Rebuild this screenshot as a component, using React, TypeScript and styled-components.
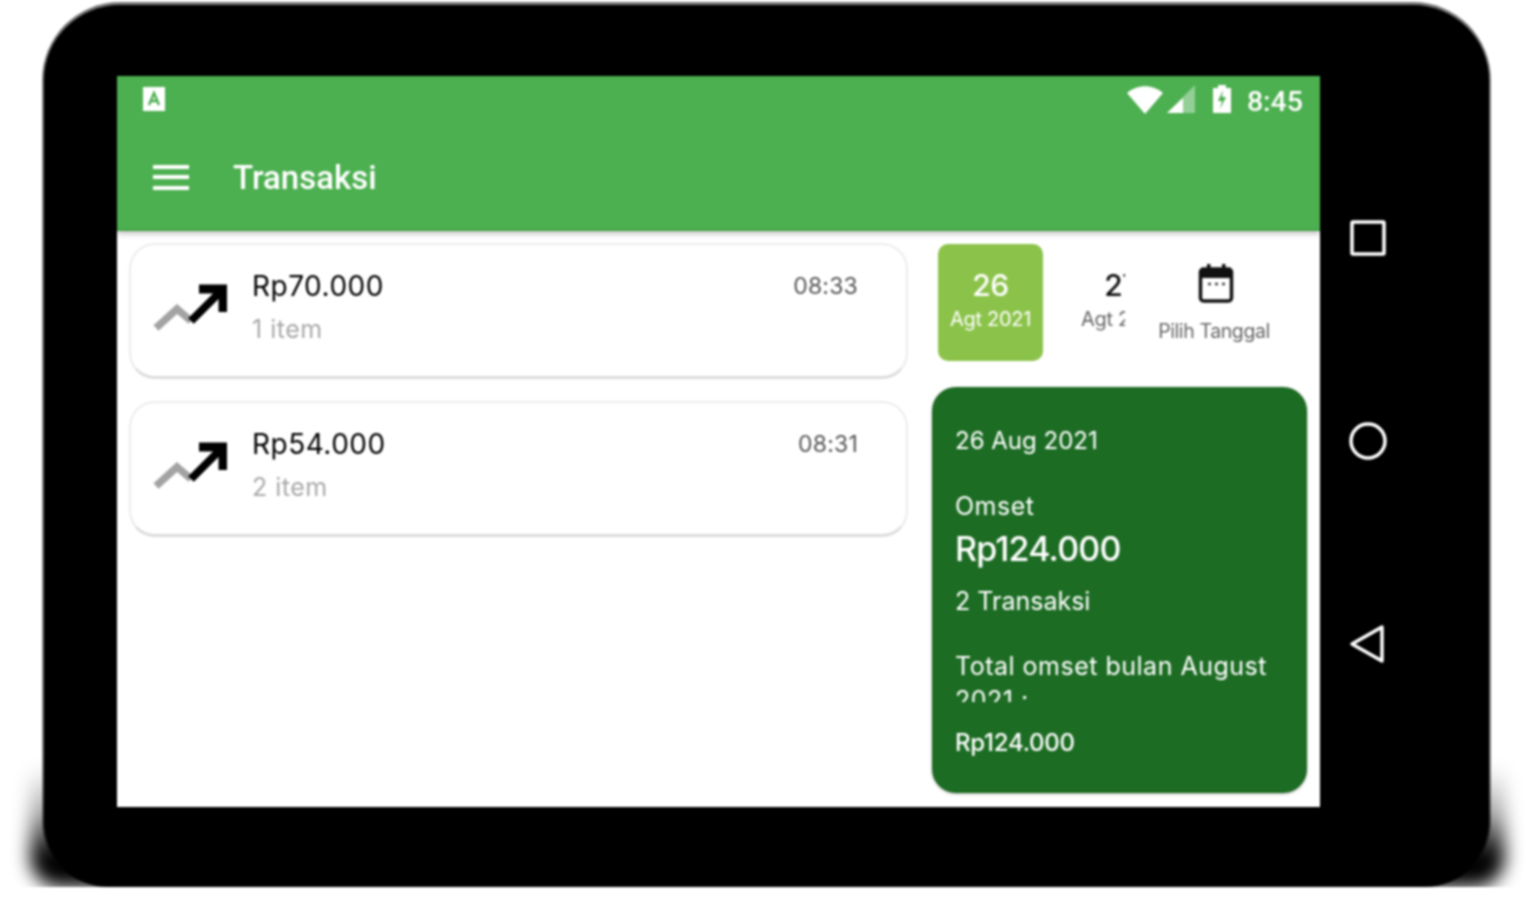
import React from "react";
import styled, { createGlobalStyle } from "styled-components";

const GlobalStyle = createGlobalStyle`
  html, body {
    margin: 0;
    padding: 0;
    background: #fff;
    overflow: hidden;
  }
  * {
    box-sizing: border-box;
  }
`;

const Page = styled.div`
  width: 1531px;
  height: 900px;
  padding: 2px 40px 0 42px;
  background: #fff;
  filter: blur(1px);
`;

const Device = styled.div`
  position: relative;
  z-index: 0;
  display: flex;
  align-items: flex-start;
  width: 1449px;
  height: 885px;
  padding: 71px 0 0 73px;
  background: #000;
  border: 2px solid #777;
  border-top-width: 3px;
  border-bottom-color: #111;
  border-radius: 78px 78px 66px 66px;

  &::before {
    content: "";
    position: absolute;
    z-index: -1;
    left: -14px;
    right: -16px;
    bottom: -2px;
    height: 120px;
    background: linear-gradient(to top, #000 25%, rgba(0, 0, 0, 0.35) 60%, transparent);
    border-radius: 0 0 30px 30px;
    filter: blur(9px);
    clip-path: inset(-50px -50px 0 -50px);
  }
`;

const Screen = styled.div`
  display: flex;
  flex-direction: column;
  width: 1203px;
  height: 731px;
  background: #fff;
  overflow: hidden;
`;

const AppHeader = styled.header`
  flex: none;
  height: 155px;
  background: #4caf50;
  border-bottom: 2px solid #43a547;
  box-shadow: 0 2px 6px rgba(0, 0, 0, 0.3);
  position: relative;
`;

const StatusBar = styled.div`
  display: flex;
  align-items: center;
  justify-content: space-between;
  height: 46px;
  padding: 0 17px 0 25px;
`;

const StatusIcons = styled.div`
  display: flex;
  align-items: center;
`;

const StatusTime = styled.span`
  margin-left: 15px;
  padding-top: 4px;
  font: 500 28.5px "Roboto", sans-serif;
  color: #fff;
`;

const Toolbar = styled.div`
  display: flex;
  align-items: center;
  height: 107px;
  padding: 3px 0 0 36px;
`;

const Title = styled.h1`
  margin: 0 0 0 44px;
  font: 500 33px "Roboto", sans-serif;
  color: #fff;
`;

const Body = styled.main`
  flex: 1;
  display: flex;
  min-height: 0;
`;

const ListColumn = styled.section`
  display: flex;
  flex-direction: column;
  gap: 22px;
  width: 802px;
  padding: 12px 0 0 12px;
`;

const TxCard = styled.article`
  display: flex;
  align-items: flex-start;
  width: 779px;
  height: 136px;
  padding: 21px 48px 0 21px;
  background: #fff;
  border: 2px solid #ececec;
  border-bottom: 3px solid #dcdcdc;
  border-radius: 26px;
`;

const TrendIcon = styled.svg`
  flex: none;
  width: 75px;
  height: 52px;
  margin: 16px 25px 0 0;
`;

const TxInfo = styled.div`
  flex: 1;
`;

const Amount = styled.div`
  font: 400 28px/40px "Inter", sans-serif;
  letter-spacing: 0.5px;
  color: #000;
`;

const Items = styled.div`
  margin-top: 3px;
  font: 400 25px/40px "Inter", sans-serif;
  letter-spacing: 0.5px;
  color: #a9a9a9;
`;

const TxTime = styled.div`
  font: 400 23px/40px "Inter", sans-serif;
  letter-spacing: 0.2px;
  color: #555;
`;

const SideColumn = styled.aside`
  flex: 1;
  display: flex;
  flex-direction: column;
  padding: 13px 13px 14px 13px;
`;

const DateRow = styled.div`
  display: flex;
  align-items: flex-start;
  height: 117px;
  margin-bottom: 26px;
`;

const DateScroller = styled.div`
  display: flex;
  gap: 26px;
  width: 193px;
  padding-left: 6px;
  overflow: hidden;
`;

const DateTab = styled.div<{ $active?: boolean }>`
  flex: none;
  display: flex;
  flex-direction: column;
  align-items: center;
  width: 105px;
  height: 117px;
  padding-top: 23px;
  border-radius: 10px;
  background: ${({ $active }) => ($active ? "#8bc34a" : "transparent")};
`;

const DateDay = styled.div<{ $active?: boolean }>`
  font: 500 30px/36px "Inter", sans-serif;
  letter-spacing: -0.5px;
  color: ${({ $active }) => ($active ? "#fff" : "#111")};
`;

const DateMonth = styled.div<{ $active?: boolean }>`
  margin-top: 2px;
  font: 400 20px/28px "Inter", sans-serif;
  letter-spacing: -0.3px;
  white-space: nowrap;
  color: ${({ $active }) => ($active ? "#fff" : "#666")};
`;

const PickDate = styled.div`
  flex: 1;
  display: flex;
  flex-direction: column;
  align-items: center;
  padding-top: 19px;
`;

const PickLabel = styled.div`
  margin: 14px 4px 0 0;
  font: 400 19.5px/28px "Inter", sans-serif;
  letter-spacing: -0.4px;
  white-space: nowrap;
  color: #666;
`;

const Summary = styled.div`
  display: flex;
  flex-direction: column;
  height: 406px;
  padding: 35px 23px 0;
  border-radius: 24px;
  background: #1d6c24;
  box-shadow: 0 1px 3px rgba(0, 0, 0, 0.3);
  color: #fff;
`;

const SummaryDate = styled.div`
  font: 400 24px/38px "Inter", sans-serif;
`;

const SummaryLabel = styled.div`
  margin-top: 27px;
  font: 400 25px/38px "Inter", sans-serif;
  letter-spacing: 0.5px;
`;

const SummaryTotal = styled.div`
  margin-top: 1px;
  font: 500 34px/46px "Inter", sans-serif;
  letter-spacing: -0.8px;
`;

const SummaryCount = styled.div`
  margin-top: 10px;
  font: 400 25px/38px "Inter", sans-serif;
`;

const MonthLabel = styled.div`
  height: 53px;
  margin-top: 29px;
  overflow: hidden;
  font: 400 25px/34px "Inter", sans-serif;
  letter-spacing: 0.5px;
`;

const MonthTotal = styled.div`
  margin-top: 22px;
  font: 500 24px/38px "Inter", sans-serif;
  letter-spacing: -0.25px;
`;

const NavColumn = styled.nav`
  display: flex;
  flex-direction: column;
  align-items: center;
  justify-content: space-between;
  width: 96px;
  height: 731px;
  padding: 141px 0 142px;
`;

const NavIcon = styled.svg`
  width: 42px;
  height: 42px;
  fill: none;
  stroke: #fff;
  stroke-width: 3.5;
`;

const MenuBars = styled.div`
  display: flex;
  flex-direction: column;
  gap: 6.5px;
  width: 36px;

  span {
    height: 4px;
    background: #fff;
  }
`;

const transactions = [
  { amount: "Rp70.000", items: "1 item", time: "08:33" },
  { amount: "Rp54.000", items: "2 item", time: "08:31" },
];

const Trend: React.FC = () => (
  <TrendIcon viewBox="0 0 75 52" fill="none">
    <path d="M4 46 L25 27 L39 39" stroke="#a3a3a3" strokeWidth="7.5" />
    <path d="M39 39 L69 9" stroke="#000" strokeWidth="8" />
    <path d="M47 7 H71 V30" stroke="#000" strokeWidth="9" />
  </TrendIcon>
);

const KeyboardBadge: React.FC = () => (
  <svg width="24" height="26" viewBox="0 0 24 26">
    <rect x="1" y="1" width="22" height="24" fill="#fff" />
    <path d="M7 19 L12 7 L17 19 M9 15 H15" fill="none" stroke="#4caf50" strokeWidth="2.4" />
  </svg>
);

const WifiIcon: React.FC = () => (
  <svg width="36" height="30" viewBox="0 0 36 30">
    <path d="M0 9 C10 0 26 0 36 9 L18 30 Z" fill="#fff" />
  </svg>
);

const SignalIcon: React.FC = () => (
  <svg width="30" height="30" viewBox="0 0 30 30" style={{ marginLeft: 3 }}>
    <path d="M29 1 V29 H1 Z" fill="#fff" fillOpacity="0.4" />
    <path d="M17 14 V29 H1 Z" fill="#fff" />
  </svg>
);

const BatteryIcon: React.FC = () => (
  <svg width="20" height="30" viewBox="0 0 20 30" style={{ marginLeft: 16 }}>
    <path d="M6 1 H14 V4 H19 V29 H1 V4 H6 Z" fill="#fff" />
    <path d="M11 6 L6 17 H10 L8 25 L14 13 H10 Z" fill="#4caf50" />
  </svg>
);

const CalendarIcon: React.FC = () => (
  <svg width="36" height="40" viewBox="0 0 36 40">
    <rect x="2.5" y="6" width="31" height="32" rx="3" fill="none" stroke="#111" strokeWidth="3.5" />
    <rect x="2.5" y="6" width="31" height="9" fill="#111" />
    <rect x="9" y="1" width="3.5" height="7" fill="#111" />
    <rect x="24" y="1" width="3.5" height="7" fill="#111" />
    <path d="M10 21 H13 M17 21 H20 M24 21 H27" stroke="#444" strokeWidth="2.4" />
  </svg>
);

export default function App() {
  return (
    <>
      <GlobalStyle />
      <Page>
        <Device>
          <Screen>
            <AppHeader>
              <StatusBar>
                <KeyboardBadge />
                <StatusIcons>
                  <WifiIcon />
                  <SignalIcon />
                  <BatteryIcon />
                  <StatusTime>8:45</StatusTime>
                </StatusIcons>
              </StatusBar>
              <Toolbar>
                <MenuBars>
                  <span />
                  <span />
                  <span />
                </MenuBars>
                <Title>Transaksi</Title>
              </Toolbar>
            </AppHeader>
            <Body>
              <ListColumn>
                {transactions.map((tx) => (
                  <TxCard key={tx.amount}>
                    <Trend />
                    <TxInfo>
                      <Amount>{tx.amount}</Amount>
                      <Items>{tx.items}</Items>
                    </TxInfo>
                    <TxTime>{tx.time}</TxTime>
                  </TxCard>
                ))}
              </ListColumn>
              <SideColumn>
                <DateRow>
                  <DateScroller>
                    <DateTab $active>
                      <DateDay $active>26</DateDay>
                      <DateMonth $active>Agt 2021</DateMonth>
                    </DateTab>
                    <DateTab>
                      <DateDay>27</DateDay>
                      <DateMonth>Agt 2021</DateMonth>
                    </DateTab>
                  </DateScroller>
                  <PickDate>
                    <CalendarIcon />
                    <PickLabel>Pilih Tanggal</PickLabel>
                  </PickDate>
                </DateRow>
                <Summary>
                  <SummaryDate>26 Aug 2021</SummaryDate>
                  <SummaryLabel>Omset</SummaryLabel>
                  <SummaryTotal>Rp124.000</SummaryTotal>
                  <SummaryCount>2 Transaksi</SummaryCount>
                  <MonthLabel>Total omset bulan August 2021 :</MonthLabel>
                  <MonthTotal>Rp124.000</MonthTotal>
                </Summary>
              </SideColumn>
            </Body>
          </Screen>
          <NavColumn>
            <NavIcon viewBox="0 0 42 42">
              <rect x="5" y="5" width="32" height="32" rx="1" />
            </NavIcon>
            <NavIcon viewBox="0 0 42 42">
              <circle cx="21" cy="21" r="17" />
            </NavIcon>
            <NavIcon viewBox="0 0 42 42">
              <path d="M5 21 L35 4 V38 Z" strokeLinejoin="round" />
            </NavIcon>
          </NavColumn>
        </Device>
      </Page>
    </>
  );
}
